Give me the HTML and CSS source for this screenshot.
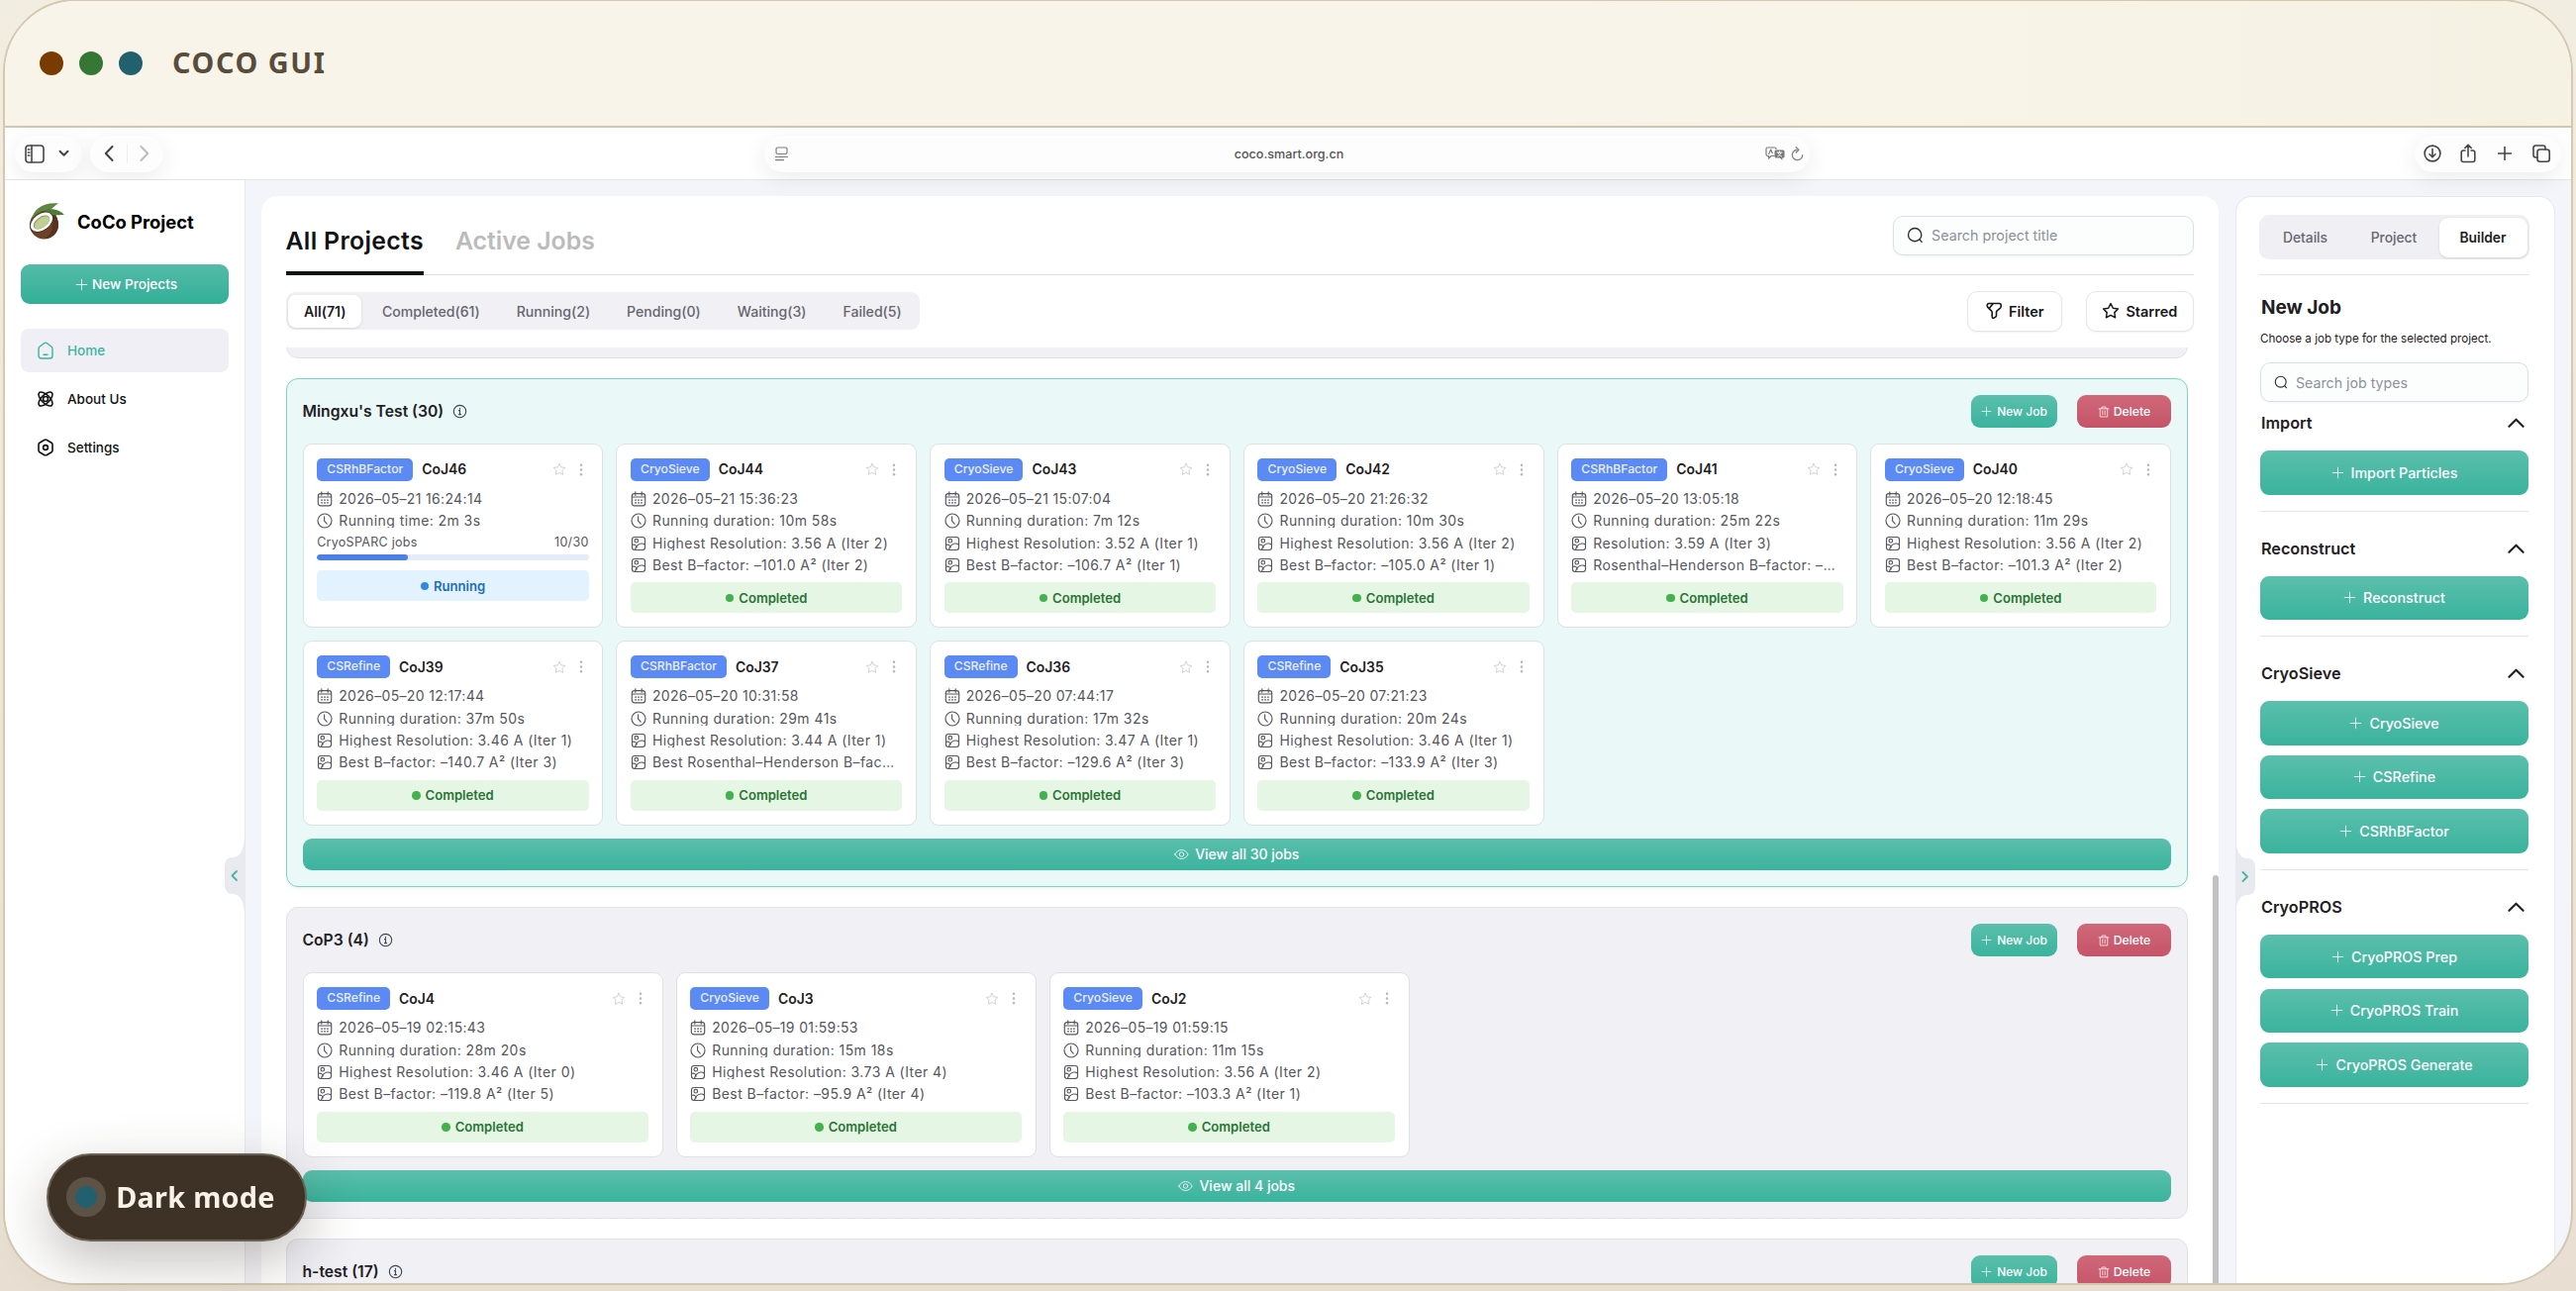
FILE: index.html
```
<!DOCTYPE html>
<html lang="en">
<head>
    <meta charset="UTF-8">
    <meta name="viewport" content="width=device-width, initial-scale=1.0">
    <title>CoCo GUI</title>
    <link rel="stylesheet" href="styles.css">
</head>
<body>
    <!-- Shared icons -->
    <svg class="sprite" aria-hidden="true">
        <symbol id="plus" viewBox="0 0 16 16"><path d="M8 1.5v13M1.5 8h13"/></symbol>
        <symbol id="search" viewBox="0 0 20 20"><circle cx="9.6" cy="9.6" r="7.8"/><path d="M15.2 15.2l2.6 2.9"/></symbol>
        <symbol id="star" viewBox="0 0 20 20"><path d="M10 1.8l2.6 5.1 5.6.9-4 4 .9 5.7-5.1-2.6-5.1 2.6.9-5.7-4-4 5.6-.9z"/></symbol>
        <symbol id="dots" viewBox="0 0 4 16"><circle cx="2" cy="2.2" r="1.5"/><circle cx="2" cy="8" r="1.5"/><circle cx="2" cy="13.8" r="1.5"/></symbol>
        <symbol id="info" viewBox="0 0 16 16"><circle cx="8" cy="8" r="6.6"/><path d="M8 7v4.3M8 4.5v1.1M6.9 7.1H8M6.9 11.3h2.2"/></symbol>
        <symbol id="calendar" viewBox="0 0 16 16"><rect x="1.3" y="2.6" width="13.4" height="12.3" rx="2.6"/><path d="M1.5 6h13M4.8.8v3.4M11.2.8v3.4"/><path d="M4.6 9.1h1M7.5 9.1h1M10.4 9.1h1M4.6 11.8h1M7.5 11.8h1M10.4 11.8h1"/></symbol>
        <symbol id="clock" viewBox="0 0 16 16"><circle cx="8" cy="8" r="7"/><path d="M7.6 3.8v4.4l2.6 2.9"/></symbol>
        <symbol id="image" viewBox="0 0 16 16"><rect x="1.5" y="1.5" width="13" height="13" rx="2.4"/><circle cx="5.8" cy="5.2" r="1.8"/><path d="M1.8 9.2c2.6-.5 4.2.7 4.4 2.8M4.6 14c.9-3.4 3-5.6 6-6 1.5-.2 2.8.3 3.7 1"/></symbol>
        <symbol id="trash" viewBox="0 0 16 16"><path d="M1.5 3.8h13M5.4 3.6V1.4h5.2v2.2M3 3.8v10.8h10V3.8M6.4 6.6v5.2M9.6 6.6v5.2"/></symbol>
        <symbol id="eye" viewBox="0 0 18 14"><path d="M1 7c1.9-3.4 4.7-5.4 8-5.4S15.1 3.6 17 7c-1.9 3.4-4.7 5.4-8 5.4S2.9 10.4 1 7z"/><circle cx="9" cy="7" r="2.7"/></symbol>
        <symbol id="up" viewBox="0 0 18 12"><path d="M1.5 10L9 2.5l7.5 7.5"/></symbol>
    </svg>

    <div class="frame">
        <div class="titlebar">
            <span class="light brown"></span>
            <span class="light green"></span>
            <span class="light blue"></span>
            <h1>COCO GUI</h1>
        </div>

        <!-- Browser toolbar -->
        <div class="toolbar">
            <div class="pill pill-sidebar">
                <svg width="20" height="19" viewBox="0 0 20 19"><rect x="1" y="1" width="18" height="17" rx="3"/><path d="M7 1v17M3.3 5h1.6M3.3 8h1.6M3.3 11h1.6"/></svg>
                <svg width="11" height="8" viewBox="0 0 11 8"><path class="thick" d="M1.5 1.8l4 4 4-4"/></svg>
            </div>
            <div class="pill pill-nav">
                <svg width="10" height="16" viewBox="0 0 10 16"><path class="thick" d="M8.5 1L1.8 8l6.7 7"/></svg>
                <span class="nav-split"></span>
                <svg class="faded" width="10" height="16" viewBox="0 0 10 16"><path class="thick" d="M1.5 1l6.7 7-6.7 7"/></svg>
            </div>
            <div class="pill address">
                <svg width="13" height="15" viewBox="0 0 13 15"><rect x="1" y="1" width="11" height="6.5" rx="1.5"/><path d="M.5 10.5h12M.5 13.7h8"/></svg>
                <span>coco.smart.org.cn</span>
                <div class="address-tools">
                    <svg width="20" height="14" viewBox="0 0 20 14"><path d="M9 9.500H6L3.500 12V9.500H2.500A1.500 1.500 0 0 1 1 8V2.500A1.500 1.500 0 0 1 2.500 1h7A1.500 1.500 0 0 1 11 2.500M3.700 7.500L5.700 3l1.500 3.500"/><path class="solid" d="M11 3.500h7a1.500 1.500 0 0 1 1.500 1.500v5a1.500 1.500 0 0 1-1.500 1.500h-.7v2.200L15 11.500h-4A1.500 1.500 0 0 1 9.500 10V5A1.500 1.500 0 0 1 11 3.500z"/><path class="light-line" d="M12 6h5M14.500 4.800V6M12.600 10c2-.8 3-2 3.400-4M13 6c.5 2 1.700 3.200 3.600 4"/></svg>
                    <svg width="13" height="15" viewBox="0 0 13 15"><path d="M6 3.300A5.200 5.200 0 1 0 11.700 8.500M5.200.7L8 3.400 5.200 6"/></svg>
                </div>
            </div>
            <div class="pill pill-actions">
                <svg width="18" height="18" viewBox="0 0 18 18"><circle cx="9" cy="9" r="7.9"/><path d="M9 4.5v8M6 9.8l3 3 3-3"/></svg>
                <svg class="share" width="16" height="20" viewBox="0 0 16 20"><path d="M5 7H3.200A2 2 0 0 0 1.200 9v7.500a2 2 0 0 0 2 2h9.600a2 2 0 0 0 2-2V9a2 2 0 0 0-2-2H11M8 13V1.500M4.800 4.500L8 1.300l3.200 3.200"/></svg>
                <svg width="14" height="14" viewBox="0 0 14 14"><path d="M7 .5v13M.5 7h13"/></svg>
                <svg width="18" height="18" viewBox="0 0 18 18"><rect x="5" y="5" width="12.2" height="12.2" rx="2.4"/><path d="M5 13H3.200A2.200 2.200 0 0 1 1 10.800V3.200A2.200 2.200 0 0 1 3.200 1h7.600A2.200 2.200 0 0 1 13 3.200V5"/></svg>
            </div>
        </div>

        <div class="app">
            <aside class="sidebar">
                <div class="brand">
                    <svg width="37" height="37" viewBox="0 0 37 37">
                        <circle cx="15.5" cy="22" r="14.5" fill="#6b4228"/>
                        <path d="M19 8c7 0 11 6 11 14s-6 14-14 14c8-4 12-16 3-28z" fill="#57331e"/>
                        <ellipse cx="13" cy="19.5" rx="13.2" ry="8.8" transform="rotate(-36 13 19.5)" fill="#4f2f1c"/>
                        <ellipse cx="13" cy="19.3" rx="12.4" ry="8" transform="rotate(-36 13 19.3)" fill="#fff"/>
                        <ellipse cx="13" cy="19.5" rx="9.4" ry="5.3" transform="rotate(-36 13 19.5)" fill="#87985a"/>
                        <ellipse cx="13.4" cy="19.8" rx="8.8" ry="4.7" transform="rotate(-36 13.4 19.8)" fill="#c0d095"/>
                        <path d="M3 16C5 7 14-1 30 .5 26 3 24 5 22 7 14 7 8 10 3 16z" fill="#5d8742"/>
                        <path d="M14 8c9-4 18-1 22 4-6 0-9 1-12 0-3-3-6-4-10-4z" fill="#4f7a38"/>
                    </svg>
                    <span>CoCo Project</span>
                </div>
                <button class="btn new-project"><svg class="icon"><use href="#plus"/></svg>New Projects</button>
                <nav>
                    <a class="active"><svg viewBox="0 0 16 18"><path d="M1 7.300c0-1 .4-1.700 1.200-2.300L6.500 1.700c.9-.7 2.100-.7 3 0L13.800 5c.8.600 1.200 1.300 1.200 2.300v6.900c0 1.600-1.100 2.800-2.800 2.800H3.800C2.100 17 1 15.800 1 14.200zM6 13.300h4"/></svg>Home</a>
                    <a><svg class="bold" viewBox="0 0 16 16"><ellipse cx="8" cy="8" rx="9" ry="4.2" transform="rotate(45 8 8)"/><ellipse cx="8" cy="8" rx="9" ry="4.2" transform="rotate(-45 8 8)"/><circle cx="8" cy="8" r="2.5"/></svg>About Us</a>
                    <a><svg class="bold" viewBox="0 0 16 18"><path d="M7 1.300c.6-.4 1.400-.4 2 0l5 2.900c.6.400 1 1 1 1.700v6.200c0 .7-.4 1.300-1 1.700l-5 2.900c-.6.400-1.400.4-2 0l-5-2.900c-.6-.4-1-1-1-1.700V5.900c0-.7.4-1.300 1-1.700z"/><circle cx="8" cy="9" r="2.4"/></svg>Settings</a>
                </nav>
                <svg class="handle handle-left" viewBox="0 0 20 78"><path class="shape" d="M20 0Q19 21 8 21Q0 21 0 30V49Q0 58 8 58Q19 58 20 78z"/><path class="arrow" d="M12 35l-4.500 4.500L12 44"/></svg>
            </aside>

            <main class="panel">
                <div class="panel-head">
                    <div class="tabs">
                        <span class="tab current">All Projects</span>
                        <span class="tab">Active Jobs</span>
                    </div>
                    <div class="search"><svg><use href="#search"/></svg>Search project title</div>
                </div>
                <div class="filters">
                    <div class="segment">
                        <span class="on">All(71)</span>
                        <span>Completed(61)</span>
                        <span>Running(2)</span>
                        <span>Pending(0)</span>
                        <span>Waiting(3)</span>
                        <span>Failed(5)</span>
                    </div>
                    <div class="filter-buttons">
                        <button class="plain"><svg viewBox="0 0 18 18"><path d="M4 1.500h10.500c1 0 1.700.8 1.700 1.700v1.200c0 .8-.4 1.400-1 1.900l-3 2.600c-.5.500-.7 1-.7 1.700v3.200c0 .5-.3 1-.8 1.300l-1.500 1c-.9.600-2 0-2-1V10.500c0-.6-.3-1.200-.8-1.700L3.300 5.900C2.700 5.300 2.300 4.600 2.300 4V3.200c0-1 .7-1.700 1.700-1.700zM8 1.800L4.200 6.800"/></svg>Filter</button>
                        <button class="plain"><svg><use href="#star"/></svg>Starred</button>
                    </div>
                </div>
                <div class="project-list" id="project-list"></div>
                <div class="scrollbar"></div>
            </main>

            <aside class="builder">
                <svg class="handle handle-right" viewBox="0 0 20 78"><path class="shape" d="M0 0Q1 21 12 21Q20 21 20 30V49Q20 58 12 58Q1 58 0 78z"/><path class="arrow" d="M7.500 35l4.500 4.500L7.500 44"/></svg>
                <div class="builder-tabs">
                    <span>Details</span>
                    <span>Project</span>
                    <span class="on">Builder</span>
                </div>
                <h2>New Job</h2>
                <p>Choose a job type for the selected project.</p>
                <div class="search small"><svg><use href="#search"/></svg>Search job types</div>
                <div id="job-types"></div>
            </aside>
        </div>
    </div>

    <button class="mode"><span class="mode-dot"></span>Dark mode</button>

    <script>
        const projects = [
            {
                name: "Mingxu's Test", count: 30, selected: true, jobs: [
                    { type: "CSRhBFactor", id: "CoJ46", date: "2026–05–21 16:24:14", time: "Running time: 2m 3s", done: 10, total: 30 },
                    { type: "CryoSieve", id: "CoJ44", date: "2026–05–21 15:36:23", time: "Running duration: 10m 58s", info: ["Highest Resolution: 3.56 A (Iter 2)", "Best B–factor: –101.0 A² (Iter 2)"] },
                    { type: "CryoSieve", id: "CoJ43", date: "2026–05–21 15:07:04", time: "Running duration: 7m 12s", info: ["Highest Resolution: 3.52 A (Iter 1)", "Best B–factor: –106.7 A² (Iter 1)"] },
                    { type: "CryoSieve", id: "CoJ42", date: "2026–05–20 21:26:32", time: "Running duration: 10m 30s", info: ["Highest Resolution: 3.56 A (Iter 2)", "Best B–factor: –105.0 A² (Iter 1)"] },
                    { type: "CSRhBFactor", id: "CoJ41", date: "2026–05–20 13:05:18", time: "Running duration: 25m 22s", info: ["Resolution: 3.59 A (Iter 3)", "Rosenthal–Henderson B–factor: –…"] },
                    { type: "CryoSieve", id: "CoJ40", date: "2026–05–20 12:18:45", time: "Running duration: 11m 29s", info: ["Highest Resolution: 3.56 A (Iter 2)", "Best B–factor: –101.3 A² (Iter 2)"] },
                    { type: "CSRefine", id: "CoJ39", date: "2026–05–20 12:17:44", time: "Running duration: 37m 50s", info: ["Highest Resolution: 3.46 A (Iter 1)", "Best B–factor: –140.7 A² (Iter 3)"] },
                    { type: "CSRhBFactor", id: "CoJ37", date: "2026–05–20 10:31:58", time: "Running duration: 29m 41s", info: ["Highest Resolution: 3.44 A (Iter 1)", "Best Rosenthal–Henderson B–fac…"] },
                    { type: "CSRefine", id: "CoJ36", date: "2026–05–20 07:44:17", time: "Running duration: 17m 32s", info: ["Highest Resolution: 3.47 A (Iter 1)", "Best B–factor: –129.6 A² (Iter 3)"] },
                    { type: "CSRefine", id: "CoJ35", date: "2026–05–20 07:21:23", time: "Running duration: 20m 24s", info: ["Highest Resolution: 3.46 A (Iter 1)", "Best B–factor: –133.9 A² (Iter 3)"] }
                ]
            },
            {
                name: "CoP3", count: 4, wide: true, jobs: [
                    { type: "CSRefine", id: "CoJ4", date: "2026–05–19 02:15:43", time: "Running duration: 28m 20s", info: ["Highest Resolution: 3.46 A (Iter 0)", "Best B–factor: –119.8 A² (Iter 5)"] },
                    { type: "CryoSieve", id: "CoJ3", date: "2026–05–19 01:59:53", time: "Running duration: 15m 18s", info: ["Highest Resolution: 3.73 A (Iter 4)", "Best B–factor: –95.9 A² (Iter 4)"] },
                    { type: "CryoSieve", id: "CoJ2", date: "2026–05–19 01:59:15", time: "Running duration: 11m 15s", info: ["Highest Resolution: 3.56 A (Iter 2)", "Best B–factor: –103.3 A² (Iter 1)"] }
                ]
            },
            { name: "h-test", count: 17, jobs: [] }
        ];

        const jobTypes = {
            "Import": ["Import Particles"],
            "Reconstruct": ["Reconstruct"],
            "CryoSieve": ["CryoSieve", "CSRefine", "CSRhBFactor"],
            "CryoPROS": ["CryoPROS Prep", "CryoPROS Train", "CryoPROS Generate"]
        };

        const icon = name => `<svg class="icon"><use href="#${name}"/></svg>`;
        const row = (name, text, cls = "") => `<div class="row ${cls}">${icon(name)}<span>${text}</span></div>`;

        function jobCard(job) {
            const running = !job.info;
            const details = running
                ? `<div class="progress-label"><span>CryoSPARC jobs</span><span>${job.done}/${job.total}</span></div>
                   <div class="progress"><i style="width:${job.done / job.total * 100}%"></i></div>`
                : row("image", job.info[0], "tight") + row("image", job.info[1]);
            return `
                <div class="job">
                    <div class="job-head">
                        <span class="chip">${job.type}</span><b>${job.id}</b>
                        <svg class="job-star"><use href="#star"/></svg>
                        <svg class="job-dots"><use href="#dots"/></svg>
                    </div>
                    ${row("calendar", job.date, "date")}
                    ${row("clock", job.time, "tight")}
                    ${details}
                    <div class="status ${running ? "running" : ""}">${running ? "Running" : "Completed"}</div>
                </div>`;
        }

        document.getElementById("project-list").innerHTML = `<div class="project previous"></div>` + projects.map(p => `
            <section class="project ${p.selected ? "selected" : ""}">
                <div class="project-head">
                    <h3>${p.name} (${p.count})</h3>${icon("info")}
                    <button class="btn new-job">${icon("plus")}New Job</button>
                    <button class="btn delete">${icon("trash")}Delete</button>
                </div>
                ${p.jobs.length ? `
                <div class="jobs ${p.wide ? "wide" : ""}">${p.jobs.map(jobCard).join("")}</div>
                <button class="btn view-all">${icon("eye")}View all ${p.count} jobs</button>` : ""}
            </section>`).join("");

        document.getElementById("job-types").innerHTML = Object.entries(jobTypes).map(([group, types]) => `
            <section class="type-group">
                <h4>${group}<svg><use href="#up"/></svg></h4>
                ${types.map(t => `<button class="btn">${icon("plus")}${t}</button>`).join("")}
            </section>`).join("");
    </script>
</body>
</html>
```
FILE: styles.css
```
* {
  margin: 0;
  padding: 0;
  box-sizing: border-box;
}

body {
  height: 1304px;
  overflow: hidden;
  font-family: Inter, "Liberation Sans", sans-serif;
  color: #1f2023;
  background: linear-gradient(180deg, #f2ede1 0%, #ebe5d3 60%, #e8dfd2 100%);
}

svg {
  display: block;
  flex: none;
  fill: none;
  stroke: currentColor;
  stroke-linecap: round;
  stroke-linejoin: round;
}

.sprite {
  position: absolute;
  width: 0;
  height: 0;
}

button {
  font-family: inherit;
  border: none;
  display: flex;
  align-items: center;
  justify-content: center;
}

.frame {
  height: 1299px;
  margin: -1px 3px 0;
  border: 2px solid #d3c9b0;
  border-radius: 74px;
  overflow: hidden;
  display: flex;
  flex-direction: column;
  background: #f4f5fa;
}

/* Title bar */
.titlebar {
  height: 128px;
  flex: none;
  display: flex;
  align-items: center;
  gap: 16px;
  padding-left: 35px;
  border-bottom: 2px solid #d1c9ae;
  background: linear-gradient(90deg, #f9f4e9 60%, #f5f2e4);
}

.light {
  width: 24px;
  height: 24px;
  border-radius: 50%;
}

.brown { background: #783b00; }
.green { background: #377736; }
.blue { background: #23606e; }

.titlebar h1 {
  margin: 0 0 3px 14px;
  font: 700 28.8px "Noto Sans", sans-serif;
  letter-spacing: 1.6px;
  color: #584c3b;
}

/* Browser toolbar */
.toolbar {
  height: 53px;
  flex: none;
  display: flex;
  align-items: center;
  padding: 0 10px;
  background: #fff;
  border-bottom: 1px solid #e5e5e8;
  color: #454545;
}

.toolbar svg {
  stroke-width: 1.6;
}

.toolbar .thick {
  stroke-width: 2;
}

.pill {
  height: 37px;
  display: flex;
  align-items: center;
  border-radius: 19px;
  background: #fdfdfd;
  box-shadow: 0 6px 24px rgba(0, 0, 0, 0.08);
}

.pill-sidebar {
  width: 68px;
  gap: 14px;
  padding-left: 10px;
}

.pill-nav {
  width: 74px;
  margin-left: 8px;
  padding: 0 14px;
  justify-content: space-between;
}

.nav-split {
  width: 1px;
  height: 20px;
  background: #efefef;
}

.faded {
  color: #bdbdbd;
}

.address {
  width: 1056px;
  margin: 0 auto 0 607px;
  padding: 0 6px 0 11px;
  justify-content: space-between;
  font-size: 12.6px;
  font-weight: 500;
  color: #555;
}

.address > span {
  margin-left: 25px;
}

.address svg {
  color: #7d7d7d;
  stroke-width: 1.2;
}

.address-tools {
  display: flex;
  align-items: center;
  gap: 6px;
}

.address .solid {
  fill: #777;
  stroke: none;
}

.address .light-line {
  stroke: #fff;
  stroke-width: 0.9;
}

.pill-actions {
  width: 148px;
  padding: 0 11px 0 9px;
  justify-content: space-between;
}

.pill-actions .share {
  margin: 0 1px 0 -2px;
}

/* Application */
.app {
  flex: 1;
  min-height: 0;
  display: flex;
}

.sidebar {
  position: relative;
  width: 243px;
  padding: 23px 16px 0;
  background: #fff;
  border-right: 1px solid #e8e9ee;
}

.brand {
  display: flex;
  align-items: center;
  gap: 12px;
  padding-left: 8px;
  font-size: 18.4px;
  font-weight: 700;
  color: #000;
}

.brand svg {
  stroke: none;
}

.btn {
  color: #fff;
  font-weight: 500;
  background: linear-gradient(#5bbfac, #3ab39d);
  border-radius: 9px;
}

.btn .icon {
  width: 13px;
  height: 13px;
  stroke-width: 1.2;
  opacity: 0.85;
}

.new-project {
  width: 210px;
  height: 40px;
  margin-top: 25px;
  padding-left: 3px;
  gap: 4px;
  font-size: 13.6px;
  background: linear-gradient(#54bba7, #32af98);
}

.sidebar nav {
  margin-top: 24.5px;
  display: flex;
  flex-direction: column;
  gap: 4.3px;
}

.sidebar nav a {
  width: 210px;
  height: 44.6px;
  display: flex;
  align-items: center;
  gap: 14px;
  padding-left: 17px;
  border-radius: 8px;
  font-size: 13.5px;
  font-weight: 500;
  color: #111;
}

.sidebar nav svg {
  width: 16px;
  height: 18px;
  stroke-width: 1.4;
  overflow: visible;
}

.sidebar nav .bold {
  stroke-width: 1.6;
}

.sidebar nav .active {
  color: #3cb59f;
  background: #f0eff5;
}

.handle {
  position: absolute;
  width: 20px;
  height: 78px;
}

.handle-left {
  top: 663px;
  right: 0;
}

.handle-right {
  top: 647px;
  left: -1px;
}

.handle .shape {
  fill: #e9eaf0;
  stroke: none;
}

.handle .arrow {
  stroke: #45b5a0;
  stroke-width: 1.8;
}

.panel {
  position: relative;
  width: 1977px;
  margin: 16px 0 0 16px;
  padding: 0 25px 0 24.5px;
  display: flex;
  flex-direction: column;
  border-radius: 16px 16px 0 0;
  background: #fff;
}

.panel-head {
  height: 80px;
  flex: none;
  display: flex;
  justify-content: space-between;
  align-items: flex-start;
  border-bottom: 1px solid #dbe1e4;
}

.tabs {
  display: flex;
  gap: 32px;
}

.tab {
  height: 80px;
  padding-top: 30px;
  font-size: 24.8px;
  font-weight: 600;
  line-height: 30px;
  color: #bbb;
}

.tab.current {
  letter-spacing: 0.33px;
  color: #111214;
  border-bottom: 4px solid #111214;
}

.search {
  width: 304px;
  height: 40px;
  margin-top: 19.5px;
  padding-left: 13px;
  display: flex;
  align-items: center;
  gap: 8px;
  font-size: 14.3px;
  color: #8b9199;
  background: #fcfefd;
  border: 1px solid #d9e1e4;
  border-radius: 10px;
  box-shadow: 0 1px 2px rgba(30, 50, 60, 0.06);
}

.search svg {
  width: 17px;
  height: 17px;
  stroke-width: 1.6;
  color: #2a2b2e;
}

.filters {
  height: 73px;
  flex: none;
  display: flex;
  justify-content: space-between;
  align-items: flex-start;
  padding-top: 16px;
}

.segment {
  display: flex;
  height: 38px;
  margin-top: 1px;
  padding: 2.5px;
  border-radius: 9px;
  background: #f0f0f5;
}

.segment span {
  padding: 0 18.5px;
  line-height: 33px;
  font-size: 14.1px;
  font-weight: 500;
  color: #66666e;
}

.segment span:last-child {
  padding-right: 16px;
}

.segment .on {
  margin-right: 2px;
  padding: 0 16px;
  border-radius: 8px;
  font-weight: 600;
  color: #1b1c1f;
  background: #fff;
  box-shadow: 0 1px 3px rgba(0, 0, 0, 0.12);
}

.filter-buttons {
  display: flex;
  gap: 24px;
}

.plain {
  min-width: 96px;
  height: 40.5px;
  padding: 0 15.7px;
  gap: 6px;
  font-size: 14.5px;
  font-weight: 600;
  color: #17181b;
  background: #fff;
  border: 1px solid #e5e5ea;
  border-radius: 10px;
  box-shadow: 0 1px 2px rgba(0, 0, 0, 0.06);
}

.plain svg {
  width: 18px;
  height: 18px;
  stroke-width: 1.6;
}

/* Projects */
.project-list {
  width: 1921.5px;
  flex: 1;
  min-height: 0;
  overflow: hidden;
}

.project {
  margin-bottom: 20px;
  padding: 16px;
  border: 1px solid #e1e1e8;
  border-radius: 12px;
  background: #f0f0f5;
}

.project:last-child {
  height: 120px;
}

.project.previous {
  height: 50px;
  margin-top: -39px;
}

.project.selected {
  border-color: #83d1c2;
  background: #eaf8f7;
  box-shadow: 0 1px 4px rgba(60, 180, 160, 0.15);
}

.project-head {
  height: 33px;
  display: flex;
  align-items: center;
}

.project-head h3 {
  margin-right: 9px;
  font-size: 15.7px;
  font-weight: 600;
}

.project-head > .icon {
  width: 15px;
  height: 15px;
  stroke-width: 1.2;
  color: #3c4650;
}

.new-job {
  width: 87px;
  height: 33px;
  margin-left: auto;
  gap: 5px;
  font-size: 12px;
}

.new-job .icon {
  width: 11px;
  height: 11px;
}

.delete {
  width: 95px;
  height: 33px;
  margin-left: 20px;
  gap: 4px;
  font-size: 12.3px;
  background: linear-gradient(#cf6879, #c65468);
}

.delete .icon {
  width: 12px;
  height: 12px;
}

.jobs {
  margin: 16px 0 13px;
  display: grid;
  grid-template-columns: repeat(6, 1fr);
  gap: 13px;
}

.jobs.wide {
  grid-template-columns: repeat(auto-fill, 364px);
}

.job {
  height: 186.3px;
  padding: 14px 13.7px;
  border: 1px solid #dbe2e5;
  border-radius: 9px;
  background: #fff;
}

.job-head {
  display: flex;
  align-items: center;
  margin-bottom: 7.3px;
}

.chip {
  height: 22.5px;
  padding: 0 10px;
  line-height: 22.5px;
  font-size: 12.2px;
  font-weight: 500;
  color: #eaf0ff;
  background: #5c8af4;
  border-radius: 5px;
}

.job-head b {
  margin-left: 9px;
  font-size: 13.9px;
  font-weight: 600;
}

.job-star {
  width: 14px;
  height: 14px;
  margin-left: auto;
  color: #bdbdc6;
}

.job-dots {
  width: 4px;
  height: 13px;
  margin: 0 6px 0 13px;
  fill: #b4b4bd;
  stroke: none;
}

.row {
  height: 22.3px;
  display: flex;
  align-items: center;
  gap: 6px;
  font-size: 14px;
  letter-spacing: 0.43px;
  color: #56565d;
}

.row .icon {
  width: 16px;
  height: 16px;
  stroke-width: 1.15;
}

.row span {
  line-height: 1;
  white-space: nowrap;
}

.row.tight span {
  overflow: hidden;
}

.row.date {
  letter-spacing: 0.34px;
}

.progress-label {
  height: 22.6px;
  display: flex;
  justify-content: space-between;
  line-height: 22px;
  font-size: 12.5px;
  letter-spacing: 0.28px;
  color: #56565d;
}

.progress {
  height: 6.5px;
  margin-bottom: 10px;
  overflow: hidden;
  border-radius: 4px;
  background: #e6ebf8;
}

.progress i {
  display: block;
  height: 100%;
  border-radius: 4px;
  background: #4c80e6;
}

.status {
  height: 31px;
  margin-top: 6.5px;
  display: flex;
  align-items: center;
  justify-content: center;
  gap: 5px;
  font-size: 13.1px;
  font-weight: 600;
  color: #2a7335;
  background: #e5f7e4;
  border-radius: 5px;
}

.status::before {
  content: "";
  width: 8.5px;
  height: 8.5px;
  border-radius: 50%;
  background: #45b04e;
}

.status.running {
  color: #1c6dbd;
  background: #e2f2fe;
}

.status.running::before {
  background: #3488dd;
}

.view-all {
  width: 100%;
  height: 32.7px;
  gap: 6px;
  font-size: 14px;
}

.view-all .icon {
  width: 15px;
  height: 12px;
}

.scrollbar {
  position: absolute;
  right: 0;
  top: 686px;
  bottom: 0;
  width: 6.5px;
  border-radius: 4px 4px 0 0;
  background: #c1c1c1;
}

/* Builder panel */
.builder {
  position: relative;
  width: 323px;
  margin: 16px 0 0 17px;
  padding: 18px 25px 0 23px;
  background: #fff;
  border: 1px solid #e6e7ef;
  border-bottom: none;
  border-radius: 16px 16px 0 0;
}

.builder-tabs {
  display: grid;
  grid-template-columns: 88px 91px 1fr;
  height: 45px;
  padding: 2.5px;
  line-height: 40px;
  text-align: center;
  font-size: 13.8px;
  font-weight: 500;
  color: #66666e;
  background: #f0eff4;
  border-radius: 10px;
}

.builder-tabs .on {
  font-weight: 600;
  color: #1b1c1f;
  background: #fff;
  border-radius: 9px;
  box-shadow: 0 1px 3px rgba(0, 0, 0, 0.12);
}

.builder h2 {
  margin-top: 15px;
  padding: 21px 2px 0;
  border-top: 1px solid #e4e5ea;
  font-size: 19px;
  font-weight: 700;
  line-height: 24px;
}

.builder p {
  margin-top: 10px;
  padding-left: 1px;
  font-size: 11.6px;
  line-height: 18px;
}

.search.small {
  width: 271px;
  margin: 15px 1px 0;
  font-size: 14.2px;
}

.search.small svg {
  width: 14px;
  height: 14px;
}

.type-group {
  margin: 0 1px;
  padding-bottom: 16px;
  border-bottom: 1px solid #e4e5ea;
}

.type-group h4 {
  height: 65px;
  padding: 21px 4px 12px 1px;
  display: flex;
  justify-content: space-between;
  align-items: center;
  font-size: 16.2px;
  font-weight: 600;
}

.type-group:first-child h4 {
  height: 49px;
  padding-top: 5px;
}

.type-group h4 svg {
  width: 17px;
  height: 12px;
  stroke-width: 2.2;
}

.type-group .btn {
  width: 100%;
  height: 44.5px;
  gap: 7px;
  font-size: 14.3px;
}

.type-group .btn + .btn {
  margin-top: 10.2px;
}

/* Theme switch */
.mode {
  position: fixed;
  left: 47px;
  top: 1165px;
  width: 263px;
  height: 89px;
  padding: 0 12px 2px 0;
  gap: 10px;
  font: 700 28.8px "Noto Sans", sans-serif;
  letter-spacing: 0.3px;
  color: #f8f2e8;
  background: rgba(54, 42, 30, 0.96);
  border: 2px solid #6a6053;
  border-radius: 45px;
  box-shadow: 0 20px 56px rgba(54, 42, 30, 0.3);
}

.mode-dot {
  width: 40px;
  height: 40px;
  border: 9px solid #5c5246;
  border-radius: 50%;
  background: #23606e;
}
```
